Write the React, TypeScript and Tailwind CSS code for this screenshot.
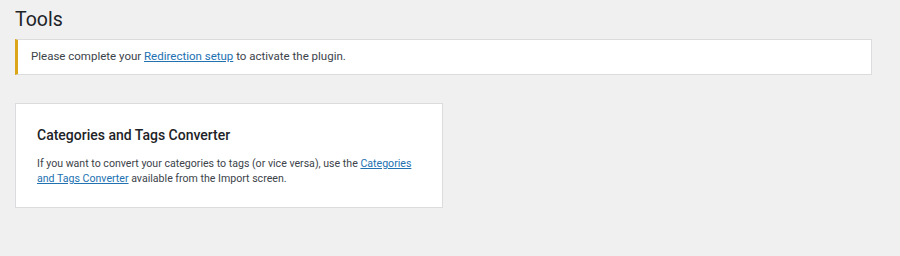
import React from "react";

const font = { fontFamily: 'Roboto, "Noto Sans", sans-serif' };

const App: React.FC = () => {
  return (
    <div
      className="w-full h-[256px] bg-[#f0f0f1] text-[#3c434a] overflow-hidden"
      style={font}
    >
      <div className="pl-[15px] pr-[28px]">
        {/* Page title */}
        <h1 className="text-[19.5px] leading-[26px] font-normal text-[#1d2327] pt-[7px] pb-[6px]">
          Tools
        </h1>

        {/* Setup notice */}
        <div className="bg-white border border-[#dcdcde] border-l-[3px] border-l-[#dba617] h-[36px] flex items-center pl-[13px] text-[11.5px] text-[#3c434a]">
          <p>
            Please complete your{" "}
            <a href="#" className="text-[#2271b1] underline">
              Redirection setup
            </a>{" "}
            to activate the plugin.
          </p>
        </div>

        {/* Converter card */}
        <div className="mt-[28px] w-[428px] h-[105px] bg-white border border-[#dcdcde] pl-[21px] pr-[18px] pt-[22px]">
          <h2 className="text-[14px] leading-[18px] font-medium text-[#1d2327]">
            Categories and Tags Converter
          </h2>
          <p className="mt-[12px] text-[10.6px] leading-[15px] text-[#3c434a]">
            If you want to convert your categories to tags (or vice versa), use the{" "}
            <a href="#" className="text-[#2271b1] underline">
              Categories and Tags Converter
            </a>{" "}
            available from the Import screen.
          </p>
        </div>
      </div>
    </div>
  );
};

export default App;
